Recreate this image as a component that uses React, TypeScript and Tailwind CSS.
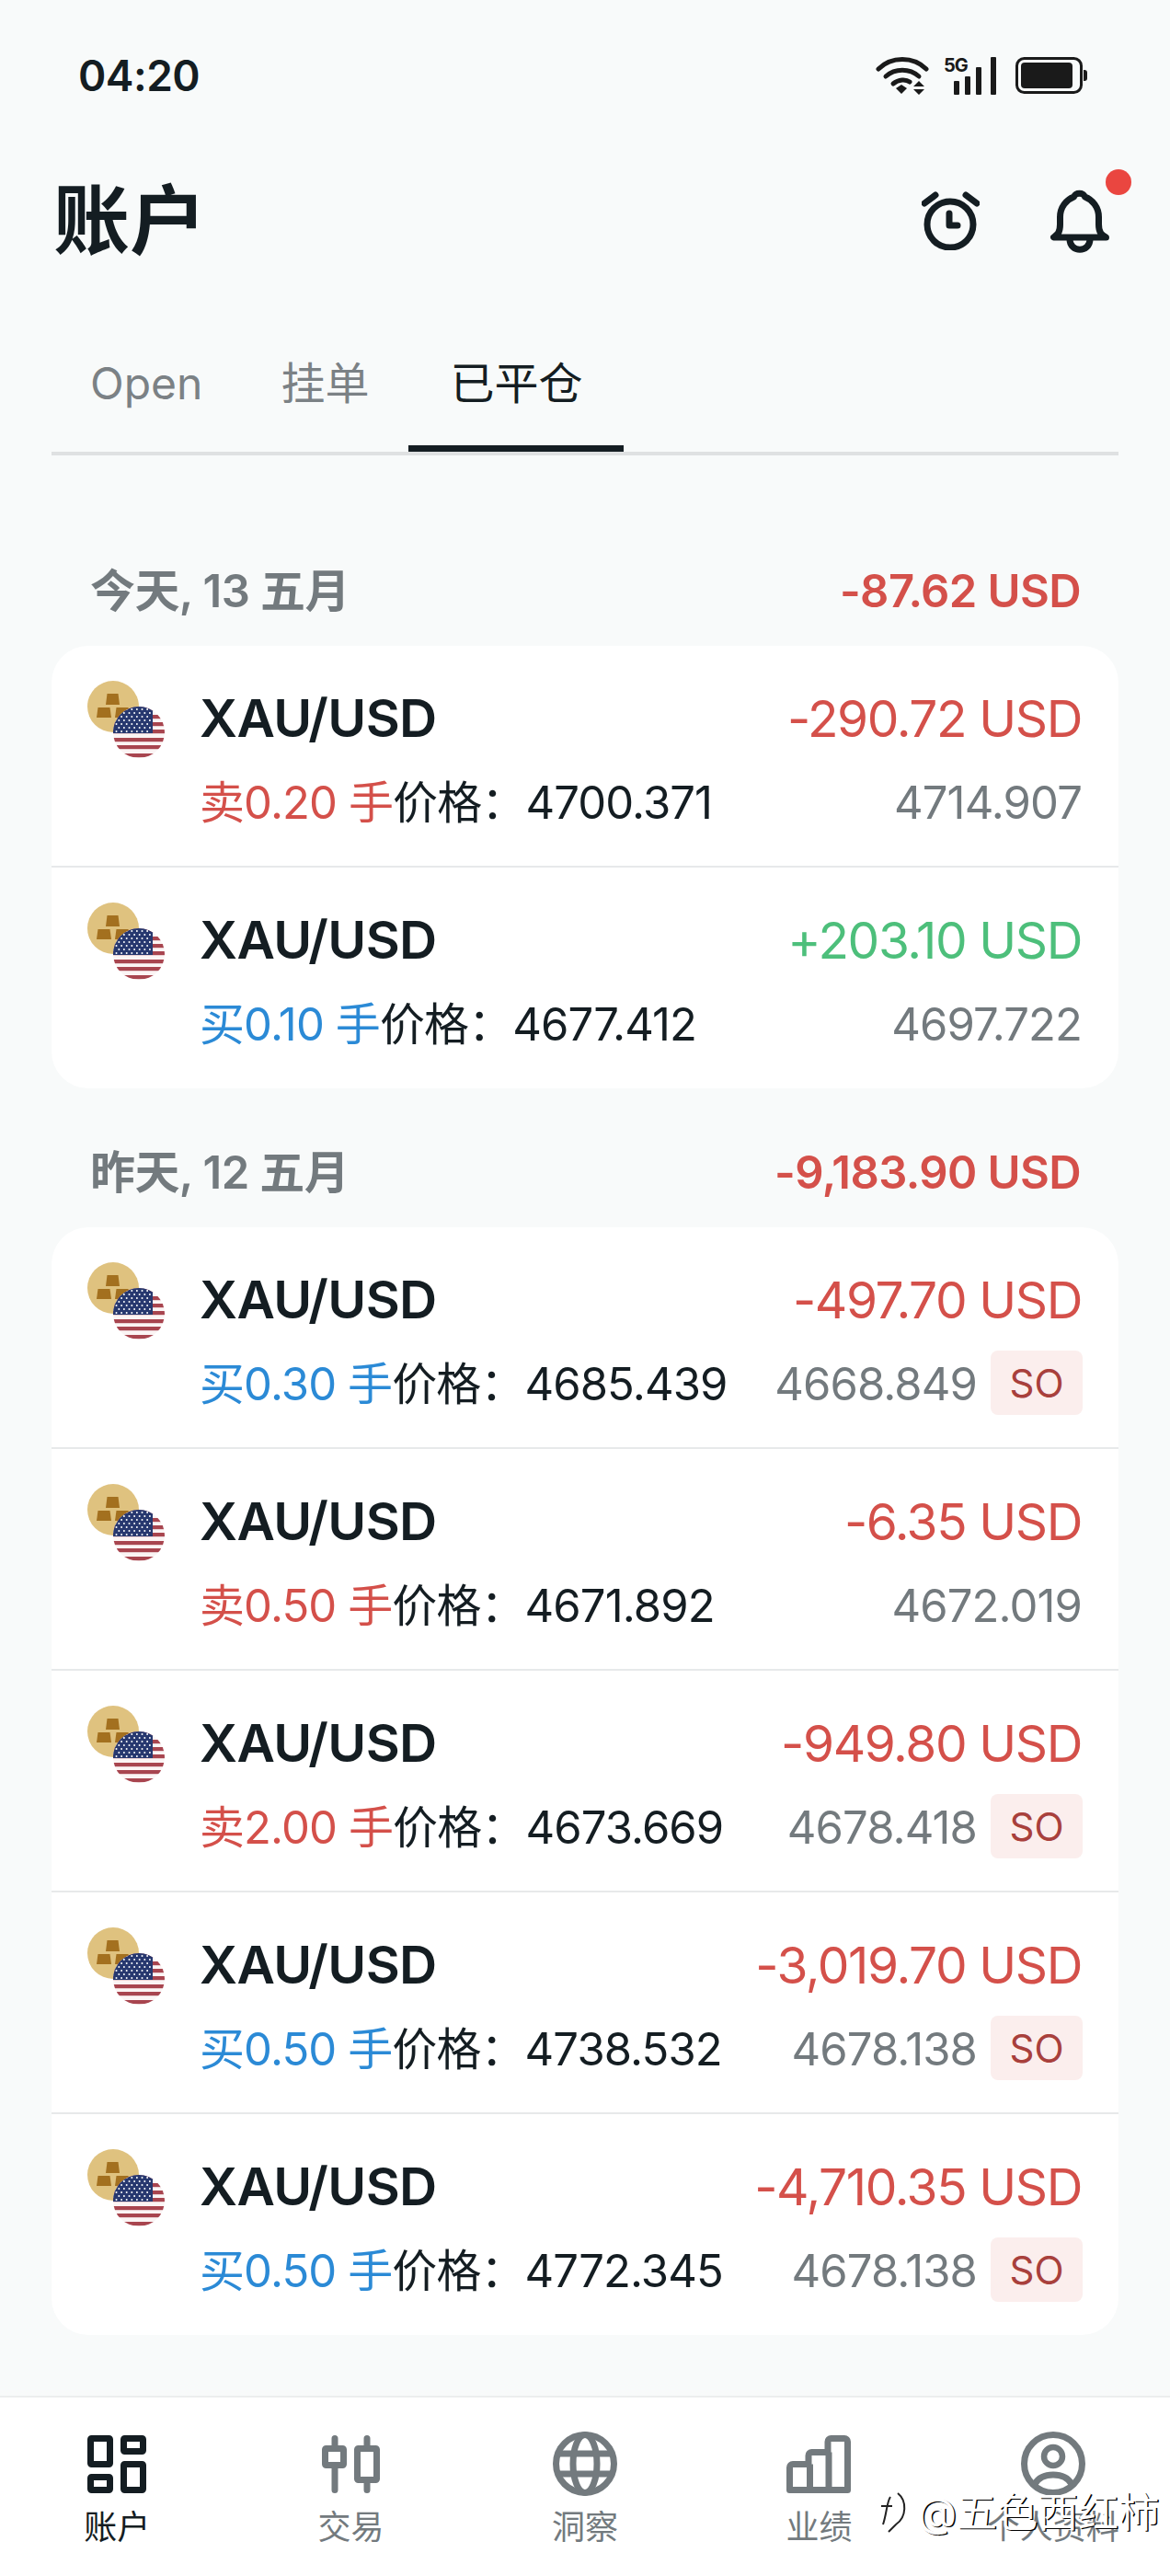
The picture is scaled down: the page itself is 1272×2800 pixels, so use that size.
import { useId } from "react";

const font = { fontFamily: '"Inter", "Noto Sans CJK SC", sans-serif' };

type Trade = {
  side: "买" | "卖";
  lots: string;
  open: string;
  close: string;
  pnl: string;
  so?: boolean;
};

const groups: { title: string; total: string; trades: Trade[] }[] = [
  {
    title: "今天, 13 五月",
    total: "-87.62 USD",
    trades: [
      { side: "卖", lots: "0.20", open: "4700.371", close: "4714.907", pnl: "-290.72 USD" },
      { side: "买", lots: "0.10", open: "4677.412", close: "4697.722", pnl: "+203.10 USD" },
    ],
  },
  {
    title: "昨天, 12 五月",
    total: "-9,183.90 USD",
    trades: [
      { side: "买", lots: "0.30", open: "4685.439", close: "4668.849", pnl: "-497.70 USD", so: true },
      { side: "卖", lots: "0.50", open: "4671.892", close: "4672.019", pnl: "-6.35 USD" },
      { side: "卖", lots: "2.00", open: "4673.669", close: "4678.418", pnl: "-949.80 USD", so: true },
      { side: "买", lots: "0.50", open: "4738.532", close: "4678.138", pnl: "-3,019.70 USD", so: true },
      { side: "买", lots: "0.50", open: "4772.345", close: "4678.138", pnl: "-4,710.35 USD", so: true },
    ],
  },
];

function PairIcon() {
  const id = useId();
  const stars: [number, number][] = [];
  for (let r = 0; r < 7; r++) {
    for (let c = 0; c < 7; c++) {
      stars.push([3.5 + c * 5.6 + (r % 2 ? 2.8 : 0), 3 + r * 4]);
    }
  }
  return (
    <div className="relative h-[84px] w-[122px] shrink-0">
      <svg viewBox="0 0 56 56" className="h-14 w-14">
        <circle cx="28" cy="28" r="28" fill="#dfc27f" />
        <path d="M21.5 14h12l1.5 12H20z" fill="#a3701f" />
        <path d="M11.5 29h13l1.5 11H10z" fill="#a3701f" />
        <path d="M31.5 29h13l1.5 11H30z" fill="#a3701f" />
      </svg>
      <svg viewBox="0 0 56 56" className="absolute top-7 left-7 h-14 w-14">
        <defs>
          <clipPath id={id}>
            <circle cx="28" cy="28" r="28" />
          </clipPath>
        </defs>
        <g clipPath={`url(#${id})`}>
          <rect width="56" height="56" fill="#fbf4f4" />
          {[2.5, 11, 19, 27, 36, 44, 53].map((y) => (
            <rect key={y} x="0" y={y - 2} width="56" height="4.2" fill="#a8454f" />
          ))}
          <rect width="43" height="29" fill="#27386f" />
          {stars.map(([x, y]) => (
            <circle key={`${x}-${y}`} cx={x} cy={y} r="1" fill="#fff" />
          ))}
        </g>
      </svg>
    </div>
  );
}

function Row({ t }: { t: Trade }) {
  const sideColor = t.side === "买" ? "text-[#2b8ad6]" : "text-[#d4504a]";
  const pnlColor = t.pnl.startsWith("+") ? "text-[#4dbf7b]" : "text-[#d4504a]";
  return (
    <div className="flex h-[241px] items-start border-b-2 border-[#e7e9ea] pr-[39px] pl-[39px] last:h-[240px] last:border-b-0">
      <div className="mt-[38px]">
        <PairIcon />
      </div>
      <div className="mt-[44px] flex min-w-0 flex-1 flex-col gap-[22px]">
        <div className="flex h-[70px] items-center justify-between pr-[1px]">
          <span className="text-[57px] font-semibold tracking-[-0.6px] text-[#141d22]">XAU/USD</span>
          <span className={`text-[55px] tracking-[-1.4px] ${pnlColor}`}>{t.pnl}</span>
        </div>
        <div className="flex h-[70px] items-center justify-between">
          <div className="flex items-center whitespace-pre text-[49px] tracking-[-0.9px] text-[#141d22]">
            <span className={sideColor}>
              {t.side}
              {t.lots} 手
            </span>
            <span>价格：</span>
            <span>{t.open}</span>
          </div>
          <div className="flex items-center gap-[15px]">
            <span className={`text-[49px] tracking-[-0.9px] text-[#737a7e] ${t.so ? "" : "pr-[1px]"}`}>{t.close}</span>
            {t.so && (
              <span className="flex h-[70px] w-[100px] -translate-y-[2px] items-center justify-center rounded-[8px] bg-[#fbeeed] text-[42px] text-[#a8403c]">
                SO
              </span>
            )}
          </div>
        </div>
      </div>
    </div>
  );
}

function NavAccount() {
  return (
    <svg viewBox="0 0 64 63" className="h-[63px] w-[64px]" fill="none" stroke="#141d22" strokeWidth="7" strokeLinejoin="round">
      <rect x="3.5" y="3.5" width="21" height="28" rx="1" />
      <rect x="39.5" y="3.5" width="21" height="14" rx="1" />
      <rect x="3.5" y="45.5" width="21" height="14" rx="1" />
      <rect x="39.5" y="31.5" width="21" height="28" rx="1" />
    </svg>
  );
}

function NavTrade() {
  return (
    <svg viewBox="0 0 64 63" className="h-[63px] w-[64px]" fill="none" stroke="#737a7e" strokeWidth="7" strokeLinecap="round" strokeLinejoin="round">
      <rect x="3.5" y="14.5" width="20" height="18" rx="1" />
      <path d="M14 3.5v10M14 34v25.5" />
      <rect x="38.5" y="14.5" width="21" height="34" rx="1" />
      <path d="M49 3.5v10M49 49v10.5" />
    </svg>
  );
}

function NavGlobe() {
  return (
    <svg viewBox="0 0 70 70" className="h-[70px] w-[70px]" fill="none" stroke="#737a7e" strokeWidth="7">
      <circle cx="35" cy="35" r="31.5" />
      <ellipse cx="35" cy="35" rx="13" ry="31.5" />
      <path d="M5 24h60M5 46h60" />
    </svg>
  );
}

function NavChart() {
  return (
    <svg viewBox="0 0 70 63" className="h-[63px] w-[70px]" fill="none" stroke="#737a7e" strokeWidth="7" strokeLinejoin="round">
      <path d="M3.5 59.5V35a3.5 3.5 0 0 1 3.5-3.5H24V22a3.5 3.5 0 0 1 3.5-3.5H45V7a3.5 3.5 0 0 1 3.5-3.5H63A3.5 3.5 0 0 1 66.5 7V59.5z" />
      <path d="M25.5 31.5V59.5M46 18.5V59.5" />
    </svg>
  );
}

function NavUser() {
  return (
    <svg viewBox="0 0 70 70" className="h-[70px] w-[70px]" fill="none" stroke="#737a7e" strokeWidth="7">
      <circle cx="35" cy="35" r="31.5" />
      <circle cx="35" cy="27" r="10" strokeWidth="6.5" />
      <path d="M15 57c4-7 12-10 20-10s16 3 20 10" />
    </svg>
  );
}

const navItems = [
  { label: "账户", icon: <NavAccount />, active: true },
  { label: "交易", icon: <NavTrade /> },
  { label: "洞察", icon: <NavGlobe /> },
  { label: "业绩", icon: <NavChart /> },
  { label: "个人资料", icon: <NavUser /> },
];

export default function App() {
  return (
    <div style={font} className="relative flex h-[2800px] w-[1272px] flex-col overflow-hidden bg-[#f8fafa] text-[#141d22]">
      {/* status bar */}
      <div className="flex h-[164px] items-center justify-between pr-[90px] pl-[85px]">
        <span className="text-[46px] font-semibold tracking-[-0.5px]">04:20</span>
        <div className="flex items-center">
          <svg viewBox="0 0 58 42" className="h-[42px] w-[58px]" fill="none" stroke="#1a1a1a" strokeWidth="5" strokeLinecap="round">
            <path d="M3 14C17 0 41 0 55 14" />
            <path d="M11 22c10-9 26-9 36 0" />
            <path d="M19 30c6-5 14-5 18-2" />
            <path d="M22 35l6 6 6-6-6-4z" fill="#1a1a1a" stroke="none" />
            <path d="M41 33h12l-6-6zM41 36h12l-6 6z" fill="#1a1a1a" stroke="none" />
          </svg>
          <div className="relative ml-[16px] h-[42px] w-[58px]">
            <span className="absolute -top-[2px] left-0 text-[20px] font-bold leading-[24px] tracking-[-1px] text-[#1a1a1a]">5G</span>
            <svg viewBox="0 0 58 42" className="h-[42px] w-[58px]" fill="#1a1a1a">
              <rect x="11" y="27" width="6" height="15" rx="1" />
              <rect x="23" y="22" width="6" height="20" rx="1" />
              <rect x="35" y="12" width="6" height="30" rx="1" />
              <rect x="51" y="1" width="6" height="41" rx="1" />
            </svg>
          </div>
          <svg viewBox="0 0 78 40" className="ml-[20px] h-[40px] w-[78px]">
            <rect x="1.5" y="1.5" width="70" height="37" rx="8" fill="none" stroke="#1a1a1a" strokeWidth="3" />
            <rect x="6" y="6" width="56" height="28" rx="4" fill="#1a1a1a" />
            <path d="M74 14h1a3 3 0 0 1 3 3v6a3 3 0 0 1-3 3h-1z" fill="#1a1a1a" />
          </svg>
        </div>
      </div>

      {/* header */}
      <div className="mt-[36px] flex h-[80px] items-center justify-between pr-[66px] pl-[58px]">
        <span className="text-[83px] font-bold leading-none">账户</span>
        <div className="flex items-center gap-[77px]">
          <svg viewBox="0 0 63 64" className="h-[64px] w-[63px]" fill="none" stroke="#141d22" strokeWidth="7" strokeLinecap="round" strokeLinejoin="round">
            <circle cx="31" cy="36" r="25" />
            <path d="M30 24v13h9" />
            <path d="M3 13 15 4M48 4 60 13" />
          </svg>
          <div className="relative">
            <svg viewBox="0 0 64 70" className="h-[70px] w-[64px]" fill="none" stroke="#141d22" strokeWidth="7" strokeLinejoin="round" strokeLinecap="round">
              <path d="M3.5 53h57c-5-3-8-5-8-14v-8c0-11-7-19-15-22-1-5-11-5-12 0-8 3-15 11-15 22v8c0 9-3 11-7 14z" />
              <path d="M21 55c0 15 22 15 22 0" />
            </svg>
            <span className="absolute -top-[21px] -right-[24px] h-[28px] w-[28px] rounded-full bg-[#ea4640]" />
          </div>
        </div>
      </div>

      {/* tabs */}
      <div className="mx-[56px] mt-[94px] flex h-[121px] items-stretch border-b-4 border-[#dfe1e2]">
        <div className="flex items-center px-[42px] pb-[31px] text-[48px] text-[#7b8185]">Open</div>
        <div className="flex items-center px-[43px] pb-[31px] text-[48px] text-[#7b8185]">挂单</div>
        <div className="flex items-center border-b-[7px] border-[#141d22] px-[45px] pb-[24px] text-[48px] text-[#141d22]">已平仓</div>
      </div>

      {/* trade groups */}
      <main className="flex flex-1 flex-col gap-[33px] px-[56px] pt-[89px]">
        {groups.map((g) => (
          <section key={g.title}>
            <div className="flex h-[118px] items-center justify-between pr-[41px] pl-[42px]">
              <span className="text-[49px] font-semibold tracking-[-0.6px] text-[#737a7e]">{g.title}</span>
              <span className="text-[49px] font-semibold tracking-[-0.6px] text-[#d4504a]">{g.total}</span>
            </div>
            <div className="overflow-hidden rounded-[40px] bg-white">
              {g.trades.map((t, i) => (
                <Row key={i} t={t} />
              ))}
            </div>
          </section>
        ))}
      </main>

      {/* bottom nav */}
      <nav className="grid h-[196px] grid-cols-5 border-t-2 border-[#eceeee] bg-white">
        {navItems.map((n) => (
          <div key={n.label} className="flex flex-col items-center pt-[34px]">
            <div className="flex h-[76px] items-center">{n.icon}</div>
            <span className={`mt-[9px] text-[36px] leading-[44px] ${n.active ? "text-[#141d22]" : "text-[#737a7e]"}`}>{n.label}</span>
          </div>
        ))}
      </nav>

      {/* watermark */}
      <div className="absolute right-[12px] bottom-[42px] flex items-center gap-[8px]">
        <svg viewBox="0 0 34 50" className="h-[50px] w-[34px]" fill="none" stroke="#222" strokeWidth="2">
          <path d="M2 18h12M12 8C8 14 8 26 4 38" />
          <path d="M20 4c10 8 10 26-2 34l-8 8" />
        </svg>
        <span className="text-[44px] leading-[54px] text-white [text-shadow:1.5px_1px_0_#000]">@五色西红柿</span>
      </div>
    </div>
  );
}
